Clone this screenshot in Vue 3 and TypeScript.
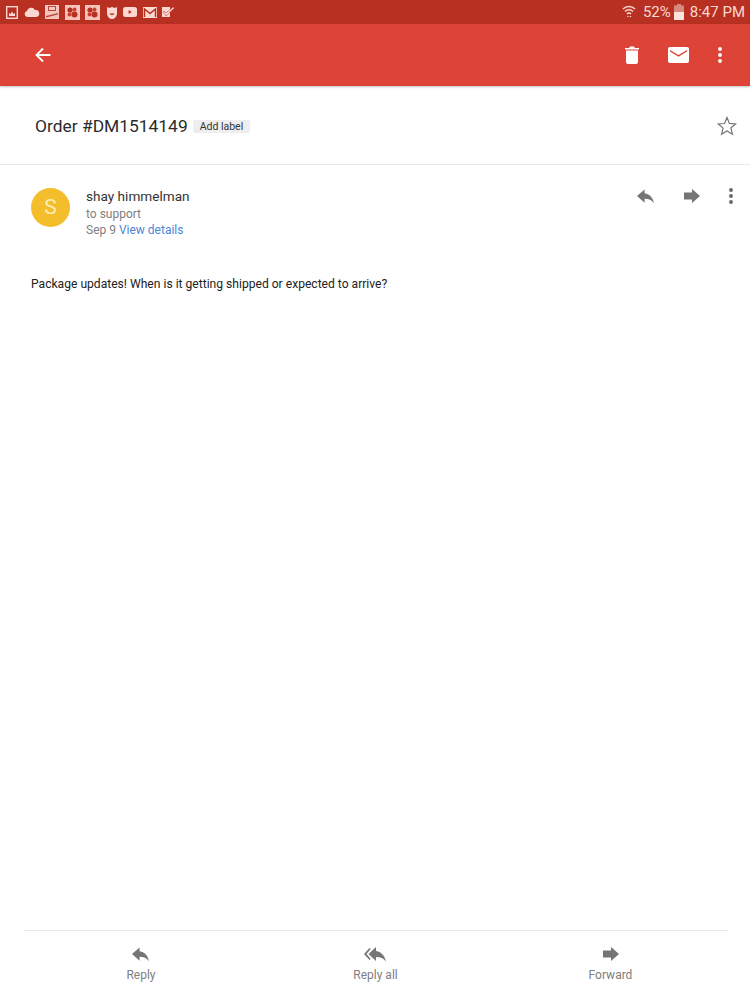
<template>
<div class="page">
    <div class="statusBar">
        <div class="notifs">
            <svg width="12" height="13" viewBox="0 0 12 13"><rect x="0.7" y="0.7" width="10.6" height="11.6" fill="none" stroke="#fbd9d2" stroke-width="1.4"/><path d="M3 10V7l1.5 1L6 5.5 7.5 8 9 7v3z" fill="#fbd9d2"/></svg>
            <svg width="16" height="10" viewBox="0 0 16 10"><path d="M3.5 10a3 3 0 0 1-.6-5.9A4.4 4.4 0 0 1 11 3a3.5 3.5 0 0 1 1.3 7z" fill="#fbd9d2"/></svg>
            <svg width="14" height="14" viewBox="0 0 14 14"><rect width="14" height="14" fill="#f6c4bb"/><rect x="3.500" y="1.500" width="7" height="4" fill="none" stroke="#b5483c" stroke-width="1"/><path d="M1 11l12-3v1.500L1 12.500z" fill="#b5483c"/></svg>
            <svg width="15" height="15" viewBox="0 0 15 15"><rect width="15" height="15" fill="#f6c4bb"/><circle cx="5" cy="5" r="2.600" fill="#b5301f"/><circle cx="9.500" cy="4.500" r="2" fill="#c9402f"/><circle cx="4.500" cy="9.500" r="2" fill="#c9402f"/><circle cx="9.500" cy="9.500" r="3" fill="#b5301f"/></svg>
            <svg width="15" height="15" viewBox="0 0 15 15"><rect width="15" height="15" fill="#f6c4bb"/><circle cx="5" cy="5" r="2.600" fill="#b5301f"/><circle cx="9.500" cy="4.500" r="2" fill="#c9402f"/><circle cx="4.500" cy="9.500" r="2" fill="#c9402f"/><circle cx="9.500" cy="9.500" r="3" fill="#b5301f"/></svg>
            <svg width="12" height="15" viewBox="0 0 12 15"><path d="M1 2l2 1 3-1 3 1 2-1v6c0 4-3 6-5 6S1 12 1 8z" fill="#fbd9d2"/><path d="M3.5 8.5c1 2 4 2 5 0z" fill="#b5301f"/></svg>
            <svg width="14" height="10" viewBox="0 0 14 10"><rect width="14" height="10" rx="2.5" fill="#fbd9d2"/><path d="M5.6 3l3.2 2-3.2 2z" fill="#b5301f"/></svg>
            <svg width="14" height="11" viewBox="0 0 14 11"><rect width="14" height="11" fill="#fbd9d2"/><path d="M1.500 10V2L7 6.500 12.500 2v8" fill="none" stroke="#b5301f" stroke-width="1.500"/></svg>
            <svg width="13" height="12" viewBox="0 0 13 12"><path d="M0 1h8v10H0z" fill="#fbd9d2"/><path d="M2 5l2 2 7-6 1.500 1L4 10 1 6z" fill="#fbd9d2" stroke="#b5301f" stroke-width="0.500"/></svg>
        </div>
        <div class="sysStatus">
            <svg width="14" height="16" viewBox="0 0 14 16"><path d="M1 5a8.500 8.500 0 0 1 12 0M3 7.500a5.500 5.500 0 0 1 8 0M5 10a2.700 2.700 0 0 1 4 0" fill="none" stroke="#fbd9d2" stroke-width="1.500"/><path d="M5 13l1-1.500L7 13zM7.500 12l1 1.500 1-1.500z" fill="#fbd9d2"/></svg>
            <span class="pct">52%</span>
            <svg class="battery" width="10" height="16" viewBox="0 0 10 16"><path d="M3 0h4v1.500h3V16H0V1.500h3z" fill="#d98a7e"/><rect y="8" width="10" height="8" fill="#fbe3de"/></svg>
            <span>8:47 PM</span>
        </div>
    </div>

    <div class="toolbar">
        <svg width="16" height="16" viewBox="0 0 16 16"><path d="M15.500 8H2M8 1.500L1.500 8 8 14.500" fill="none" stroke="#fff" stroke-width="1.800"/></svg>
        <div class="toolActions">
            <svg width="14" height="18" viewBox="0 0 14 18"><path d="M1 4.500h12V16a2 2 0 0 1-2 2H3a2 2 0 0 1-2-2zM0 2h4l1-1.500h4L10 2h4v1.500H0z" fill="#fff"/></svg>
            <svg width="21" height="16" viewBox="0 0 21 16"><path d="M2 0h17a2 2 0 0 1 2 2v12a2 2 0 0 1-2 2H2a2 2 0 0 1-2-2V2a2 2 0 0 1 2-2zm0 3v1.600l8.500 5.200L19 4.600V3l-8.500 5.100z" fill="#fff" fill-rule="evenodd"/></svg>
            <svg width="4" height="16" viewBox="0 0 4 16"><circle cx="2" cy="2" r="1.900" fill="#fff"/><circle cx="2" cy="8" r="1.900" fill="#fff"/><circle cx="2" cy="14" r="1.900" fill="#fff"/></svg>
        </div>
    </div>

    <div class="subjectRow">
        <span class="subject">Order #DM1514149</span>
        <span class="addLabel">Add label</span>
        <svg class="star" width="20" height="20" viewBox="0 0 20 20"><path d="M10 1.500l2.400 5.900 6.300.5-4.800 4.100 1.500 6.200L10 15l-5.400 3.300 1.500-6.200L1.300 8l6.300-.5z" fill="none" stroke="#757575" stroke-width="1.200"/></svg>
    </div>

    <div class="message">
        <div class="sender">
            <div class="avatar">S</div>
            <div class="meta">
                <div class="name">shay himmelman</div>
                <div class="line">to support</div>
                <div class="line">Sep 9 <span class="link">View details</span></div>
            </div>
            <div class="msgActions">
                <svg width="18" height="15" viewBox="0 0 19 15"><path d="M8 4V0L0 7l8 7v-4.100c4.500 0 7.700 1.400 10 4.600C17 9.500 14 5 8 4z" fill="#757575"/></svg>
                <svg width="16" height="14" viewBox="0 0 16 14"><path d="M0 3.500h8V0l8 7-8 7v-3.500H0z" fill="#757575"/></svg>
                <svg width="4" height="16" viewBox="0 0 4 16"><circle cx="2" cy="2" r="1.900" fill="#666"/><circle cx="2" cy="8" r="1.900" fill="#666"/><circle cx="2" cy="14" r="1.900" fill="#666"/></svg>
            </div>
        </div>
        <div class="bodyText">Package updates! When is it getting shipped or expected to arrive?</div>
    </div>

    <div class="bottomBar">
        <div v-for="b in buttons" :key="b.label" class="bottomBtn">
            <div class="btnIcon">
                <svg v-if="b.icon === 'reply'" width="18" height="15" viewBox="0 0 19 15"><path d="M8 4V0L0 7l8 7v-4.100c4.500 0 7.700 1.400 10 4.600C17 9.500 14 5 8 4z" fill="#757575"/></svg>
                <svg v-else-if="b.icon === 'all'" width="23" height="15" viewBox="0 0 23 15"><path d="M5.500 1L0 7l5.500 6 1.200-1L2.500 7l4.200-5zM12 4V0L4.500 7l7.500 7V9.900c4.500 0 7.700 1.400 10 4.600C21 9.500 18 5 12 4z" fill="#757575"/></svg>
                <svg v-else width="16" height="14" viewBox="0 0 16 14"><path d="M0 3.500h8V0l8 7-8 7v-3.500H0z" fill="#757575"/></svg>
            </div>
            <span class="btnLabel">{{ b.label }}</span>
        </div>
    </div>
</div>
</template>

<script setup lang="ts">
const buttons = [
    { label: 'Reply', icon: 'reply' },
    { label: 'Reply all', icon: 'all' },
    { label: 'Forward', icon: 'forward' },
]
</script>

<style scoped>
.page {
    width: 750px;
    height: 1000px;
    display: flex;
    flex-direction: column;
    background-color: #fff;
    font-family: Roboto, "Liberation Sans", sans-serif;
    overflow: hidden;
}
.statusBar {
    height: 24px;
    background-color: #b83022;
    display: flex;
    align-items: center;
    justify-content: space-between;
    padding: 0 5px 0 6px;
}
.notifs {
    display: flex;
    align-items: center;
    gap: 5.5px;
}
.sysStatus {
    display: flex;
    align-items: center;
    color: #fbd9d2;
    font-size: 15px;
}
.pct {
    margin-left: 7px;
}
.battery {
    margin: 0 6px 0 3px;
}
.toolbar {
    height: 62px;
    background-color: #dd4437;
    display: flex;
    align-items: center;
    justify-content: space-between;
    padding: 0 28px 1px 35px;
    box-sizing: border-box;
    box-shadow: 0 1px 2px rgba(0, 0, 0, .25);
}
.toolActions {
    display: flex;
    align-items: center;
    gap: 29px;
}
.subjectRow {
    height: 76px;
    display: flex;
    align-items: center;
    padding: 2px 13px 0 35px;
    border-bottom: 1px solid #e8e8e8;
}
.subject {
    font-size: 17.400px;
    color: #2b2b2b;
}
.addLabel {
    margin-left: 5px;
    padding: 0 7px;
    height: 13px;
    line-height: 13px;
    font-size: 10.500px;
    color: #333;
    background-color: #eee;
    border-radius: 2px;
}
.star {
    margin-left: auto;
    margin-top: -1px;
}
.message {
    flex: 1;
    padding: 23px 17px 0 31px;
}
.sender {
    display: flex;
    align-items: flex-start;
}
.avatar {
    width: 39px;
    height: 39px;
    border-radius: 50%;
    background-color: #f4bd2c;
    color: #fdeeb8;
    font-size: 21px;
    line-height: 39px;
    text-align: center;
    flex-shrink: 0;
}
.meta {
    margin-left: 16px;
}
.name {
    font-size: 13.600px;
    line-height: 17px;
    margin-bottom: 1px;
    color: #333;
}
.line {
    font-size: 12px;
    line-height: 16px;
    color: #808080;
}
.link {
    color: #4a86d8;
}
.msgActions {
    margin-left: auto;
    display: flex;
    align-items: center;
    gap: 29px;
}
.bodyText {
    margin-top: 38px;
    font-size: 12.100px;
    line-height: 16px;
    color: #222;
}
.bottomBar {
    height: 69px;
    margin: 0 22px 0 24px;
    border-top: 1px solid #e8e8e8;
    display: grid;
    grid-template-columns: 234px 235px 235px;
}
.bottomBtn {
    display: flex;
    flex-direction: column;
    align-items: center;
    padding-top: 16px;
}
.btnIcon {
    height: 15px;
    display: flex;
}
.btnLabel {
    margin-top: 6px;
    font-size: 12px;
    line-height: 14px;
    color: #808080;
}
</style>
